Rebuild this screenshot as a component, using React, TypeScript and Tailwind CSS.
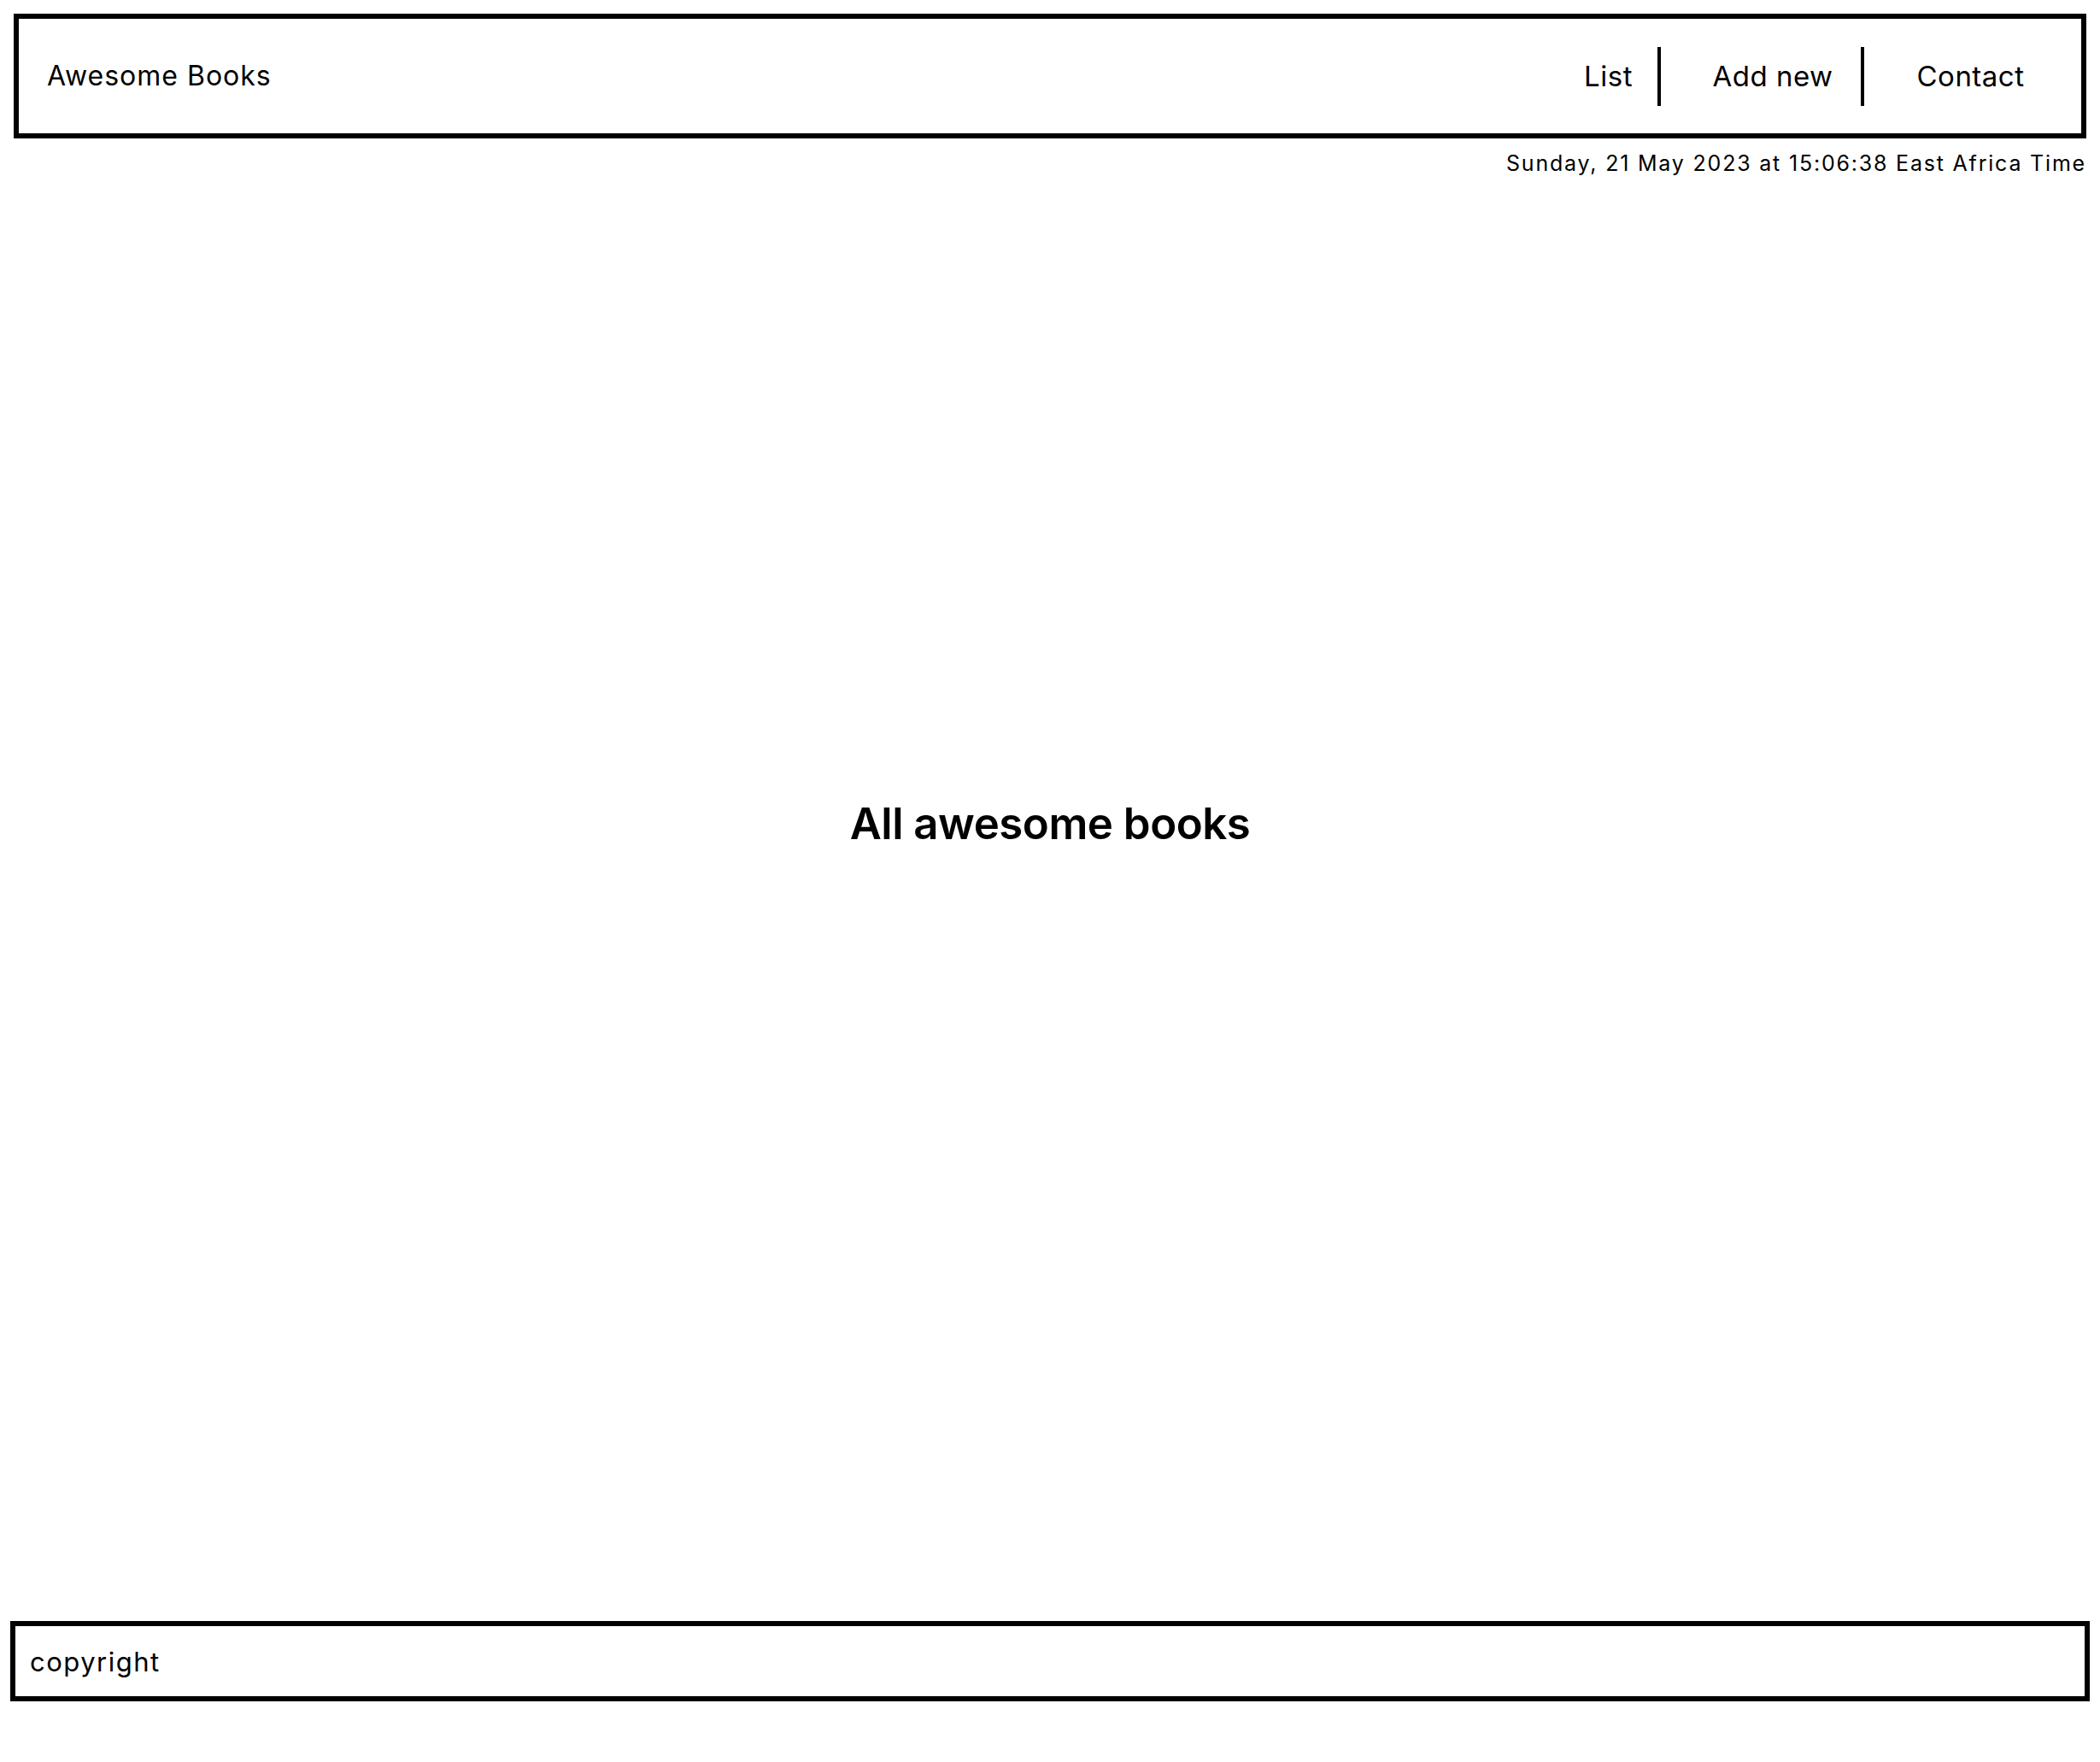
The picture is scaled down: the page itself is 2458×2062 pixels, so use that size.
import React from 'react';

const font = { fontFamily: 'Inter, "Noto Sans", sans-serif' };

function NavLinks() {
  return (
    <nav className="flex shrink-0 items-center whitespace-nowrap text-[33px] leading-none tracking-[0.5px]">
      <a className="flex w-[49px] justify-center">List</a>
      <span className="ml-[33px] h-[69px] w-[4px] bg-black" />
      <a className="ml-[62px] flex w-[138px] justify-center">Add new</a>
      <span className="ml-[34px] h-[69px] w-[4px] bg-black" />
      <a className="ml-[60px] flex w-[129px] justify-center">Contact</a>
    </nav>
  );
}

export default function App() {
  return (
    <div className="min-h-[2062px] bg-white px-[16px] pt-[16px] text-black" style={font}>
      <header className="flex h-[146px] items-center justify-between border-[6px] border-black pl-[33px] pr-[65px]">
        <h1 className="text-[32px] leading-none tracking-[1px]">Awesome Books</h1>
        <NavLinks />
      </header>
      <p className="mt-[17px] text-right text-[25px] leading-none tracking-[1.8px]">
        Sunday, 21 May 2023 at 15:06:38 East Africa Time
      </p>

      <main className="flex h-[1693px] justify-center pt-[734px]">
        <h2 className="text-[51px] font-semibold leading-none tracking-[-0.5px]">All awesome books</h2>
      </main>

      <footer className="-mx-[4px] flex h-[94px] items-center border-[6px] border-black px-[17px]">
        <span className="text-[31px] leading-none tracking-[1.5px]">copyright</span>
      </footer>
    </div>
  );
}
